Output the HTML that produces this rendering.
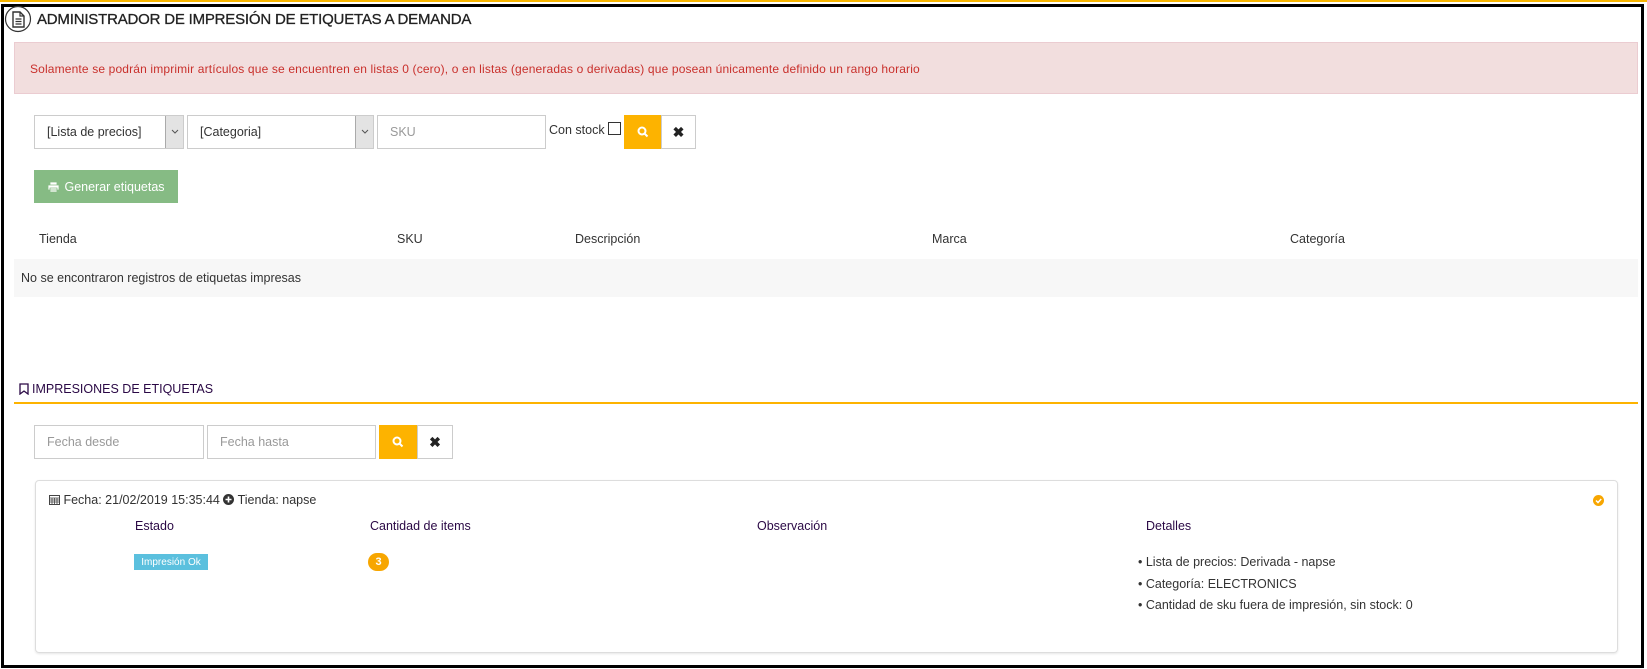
<!DOCTYPE html>
<html><head><meta charset="utf-8"><style>
*{box-sizing:border-box;margin:0;padding:0}
body{width:1647px;height:669px;background:#fff;font-family:"Liberation Sans",Arial,sans-serif;font-size:12.5px;color:#333;position:relative;overflow:hidden}
.a{position:absolute}
.box{position:absolute;border:1px solid #ccc;background:#fff;color:#999;font-size:12.5px;padding-left:12px;display:flex;align-items:center}
.sel{color:#333}
.arr{position:absolute;right:0;top:0;bottom:0;width:18px;background:#e3e3e3;border-left:1px solid #aaa;display:flex;align-items:center;justify-content:center}
.btn{position:absolute;display:flex;align-items:center;justify-content:center}
.th{position:absolute;top:232px;font-size:12.5px}
.ch{position:absolute;top:519px;color:#2a0845;font-size:12.5px}
</style></head><body>
<div class="a" style="left:0;top:0;width:1647px;height:2px;background:#f7b500"></div>
<div class="a" style="left:1px;top:4px;width:1643px;height:664px;border:3px solid #000"></div>
<svg class="a" style="left:4px;top:5px" width="28" height="28" viewBox="0 0 28 28"><circle cx="14" cy="14" r="12.5" fill="#fff" stroke="#333" stroke-width="1.2"/><path d="M9 7h7l4 4v11H9z" fill="none" stroke="#333" stroke-width="1.4"/><path d="M16 7v4h4M11.5 14h6M11.5 16.5h6M11.5 19h6" stroke="#333" stroke-width="1.2" fill="none"/></svg>
<div class="a" style="left:37px;top:11px;font-size:15px;letter-spacing:-0.2px;color:#222;-webkit-text-stroke:0.3px #222">ADMINISTRADOR DE IMPRESIÓN DE ETIQUETAS A DEMANDA</div>
<div class="a" style="left:14px;top:42px;width:1624px;height:52px;background:#f2dede;border:1px solid #ebccd1"></div>
<div class="a" style="left:30px;top:62px;font-size:12px;color:#c9302c;letter-spacing:0.15px">Solamente se podrán imprimir artículos que se encuentren en listas 0 (cero), o en listas (generadas o derivadas) que posean únicamente definido un rango horario</div>

<div class="box sel" style="left:34px;top:115px;width:150px;height:34px">[Lista de precios]<div class="arr"><svg width="8" height="6"><path d="M1 1l3 3 3-3" stroke="#555" fill="none"/></svg></div></div>
<div class="box sel" style="left:187px;top:115px;width:187px;height:34px">[Categoria]<div class="arr"><svg width="8" height="6"><path d="M1 1l3 3 3-3" stroke="#555" fill="none"/></svg></div></div>
<div class="box" style="left:377px;top:115px;width:169px;height:34px">SKU</div>
<div class="a" style="left:549px;top:123px;font-size:12.5px">Con stock</div>
<div class="a" style="left:608px;top:122px;width:13px;height:13px;border:1px solid #333;background:#fff"></div>
<div class="btn" style="left:624px;top:115px;width:37px;height:34px;background:#fdb300"><svg width="12" height="12"><circle cx="5" cy="5" r="3.5" stroke="#fff" stroke-width="2" fill="none"/><path d="M7.5 7.5l3 3" stroke="#fff" stroke-width="2"/></svg></div>
<div class="btn" style="left:661px;top:115px;width:35px;height:34px;border:1px solid #ccc;font-weight:bold;font-size:14px;color:#222">✖</div>

<div class="btn" style="left:34px;top:170px;width:144px;height:33px;background:#86bb84;color:#fff;font-size:12.5px"><svg width="13" height="12" style="margin-right:4px"><path d="M3 1h7v3H3z M1 4h11v5H1z M3 7h7v4H3z" fill="#fff" stroke="#86bb84" stroke-width="0.8"/></svg>Generar etiquetas</div>

<div class="th" style="left:39px">Tienda</div>
<div class="th" style="left:397px">SKU</div>
<div class="th" style="left:575px">Descripción</div>
<div class="th" style="left:932px">Marca</div>
<div class="th" style="left:1290px">Categoría</div>
<div class="a" style="left:14px;top:259px;width:1624px;height:38px;background:#f7f7f7"></div>
<div class="a" style="left:21px;top:271px">No se encontraron registros de etiquetas impresas</div>

<svg class="a" style="left:19px;top:383px" width="10" height="12"><path d="M1 1h8v10L5 8 1 11z" fill="none" stroke="#2a0845" stroke-width="1.3"/></svg>
<div class="a" style="left:32px;top:382px;font-size:12.5px;color:#2a0845">IMPRESIONES DE ETIQUETAS</div>
<div class="a" style="left:14px;top:402px;width:1624px;height:2px;background:#fdb300"></div>

<div class="box" style="left:34px;top:425px;width:170px;height:34px">Fecha desde</div>
<div class="box" style="left:207px;top:425px;width:169px;height:34px">Fecha hasta</div>
<div class="btn" style="left:379px;top:425px;width:38px;height:34px;background:#fdb300"><svg width="12" height="12"><circle cx="5" cy="5" r="3.5" stroke="#fff" stroke-width="2" fill="none"/><path d="M7.5 7.5l3 3" stroke="#fff" stroke-width="2"/></svg></div>
<div class="btn" style="left:417px;top:425px;width:36px;height:34px;border:1px solid #ccc;font-weight:bold;font-size:14px;color:#222">✖</div>

<div class="a" style="left:35px;top:480px;width:1583px;height:173px;border:1px solid #ddd;border-radius:4px;box-shadow:0 1px 2px rgba(0,0,0,.1)"></div>
<div class="a" style="left:49px;top:493px;font-size:12.5px">
<svg width="11" height="11" style="vertical-align:-1px"><rect x="0.5" y="1.5" width="10" height="9" fill="none" stroke="#444"/><path d="M0.5 4h10M3 4v6M5.5 4v6M8 4v6M0.5 6h10M0.5 8h10" stroke="#444" stroke-width="0.8"/></svg> Fecha: 21/02/2019 15:35:44 <svg width="11" height="11" style="vertical-align:-1px"><circle cx="5.5" cy="5.5" r="5.5" fill="#333"/><path d="M5.5 2.5v6M2.5 5.5h6" stroke="#fff" stroke-width="1.6"/></svg> Tienda: napse</div>
<svg class="a" style="left:1593px;top:495px" width="11" height="11"><circle cx="5.5" cy="5.5" r="5.5" fill="#f7a600"/><path d="M3 5.5l2 2 3.2-3.5" stroke="#fff" stroke-width="1.5" fill="none"/></svg>
<div class="ch" style="left:135px">Estado</div>
<div class="ch" style="left:370px">Cantidad de items</div>
<div class="ch" style="left:757px">Observación</div>
<div class="ch" style="left:1146px">Detalles</div>
<div class="a" style="left:134px;top:554px;width:74px;height:16px;background:#5bc0de;color:#fff;font-size:10px;display:flex;align-items:center;justify-content:center">Impresión Ok</div>
<div class="a" style="left:368px;top:553px;width:21px;height:18px;border-radius:9px;background:#f7a600;color:#fff;font-size:11px;font-weight:bold;display:flex;align-items:center;justify-content:center">3</div>
<div class="a" style="left:1138px;top:552px;line-height:21.5px;font-size:12.5px">
<div>• Lista de precios: Derivada - napse</div>
<div>• Categoría: ELECTRONICS</div>
<div>• Cantidad de sku fuera de impresión, sin stock: 0</div>
</div>
</body></html>
